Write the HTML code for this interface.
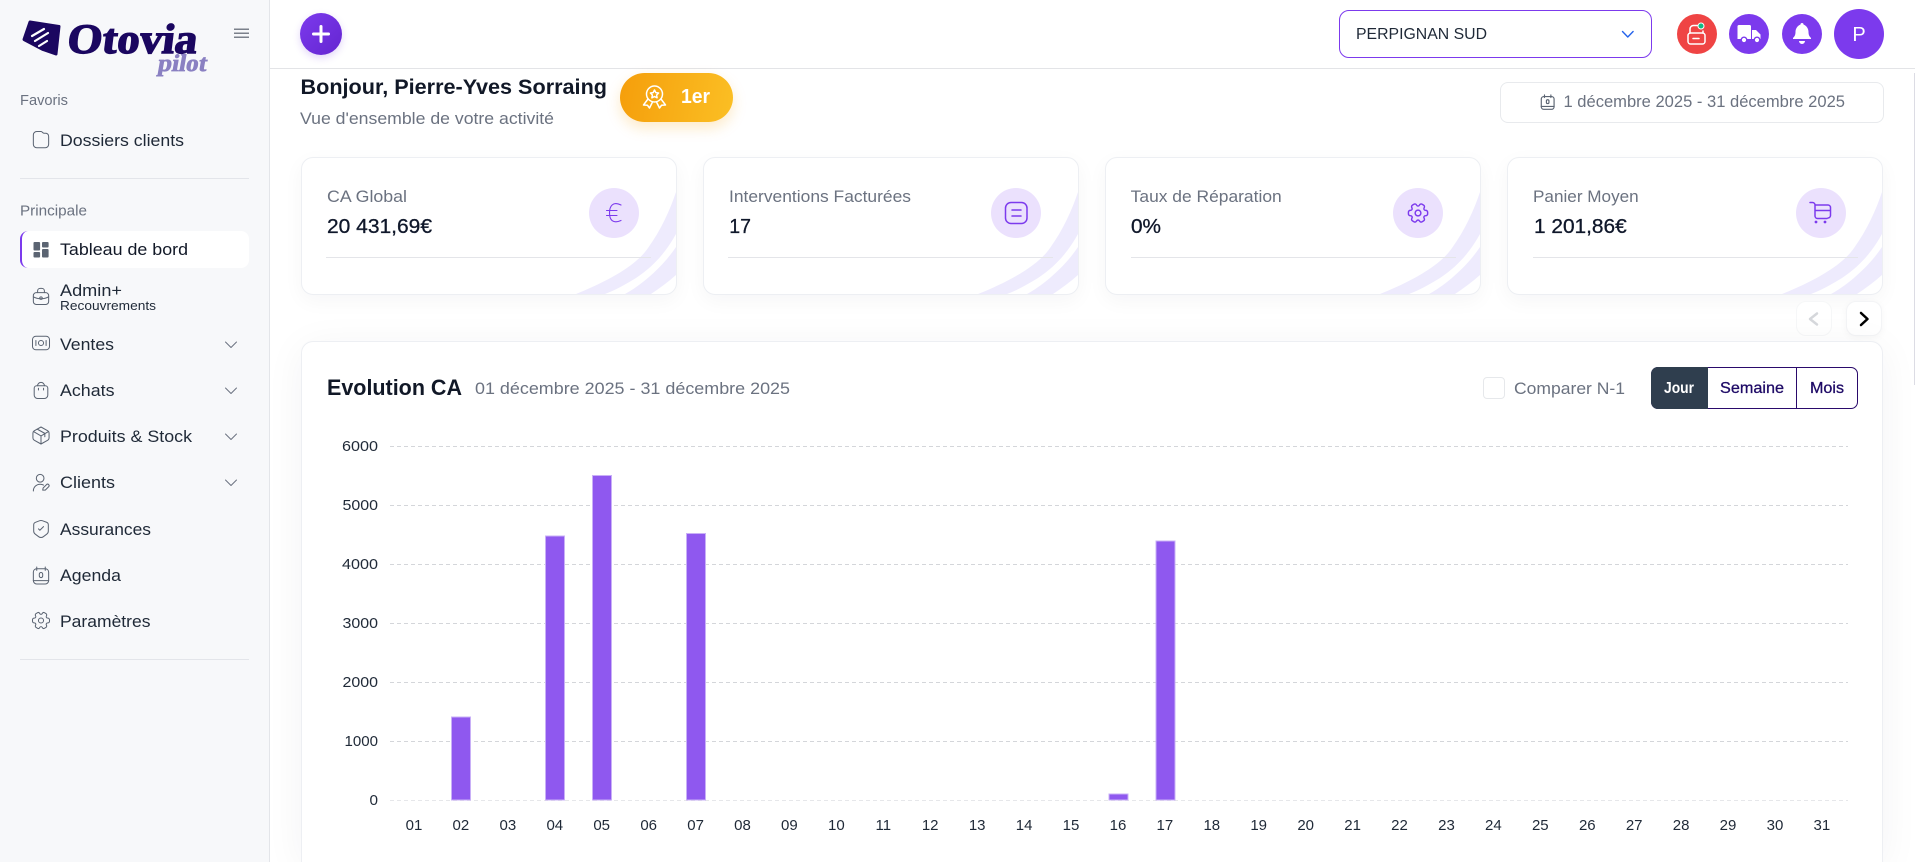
<!DOCTYPE html>
<html lang="fr">
<head>
<meta charset="utf-8">
<title>Otovia Pilot</title>
<style>
html,body{margin:0;padding:0;width:1915px;height:862px;overflow:hidden;background:#fff;font-family:"Liberation Sans",sans-serif}
#root{position:relative;width:1915px;height:862px;overflow:hidden;background:#fff}
.a{position:absolute;box-sizing:border-box}
.card{top:157px;width:376px;height:138px;background:#fff;border:1px solid #edeff3;border-radius:12px;box-shadow:0 6px 20px rgba(30,30,60,.04);overflow:hidden}
.card svg{position:absolute;right:0;bottom:0}
.circ{top:188px;width:50px;height:50px;border-radius:50%;background:#ebe1fd}
.hr{top:257px;height:1px;background:#e4e5e9;width:325px}
svg.o{position:absolute;left:0;top:0}
svg.o text{font-family:"Liberation Sans",sans-serif}
.g{fill:#6b7280}
.n{fill:#1f2937}
.m{stroke-width:.3px;paint-order:stroke}
.ic{fill:none;stroke:#5b6472;stroke-width:1.5;stroke-linecap:round;stroke-linejoin:round}
.pi{fill:none;stroke:#7c3aed;stroke-width:1.5;stroke-linecap:round;stroke-linejoin:round}
.ax{fill:#1f2937;font-size:15px}
.xl{fill:#1f2937;font-size:15px;text-anchor:middle}
.bar{fill:#8f58ef;stroke:#c9b0f7;stroke-width:1}
.gl{stroke:#d4d6da;stroke-width:1;stroke-dasharray:4 3}
</style>
</head>
<body>
<div id="root">
<!-- sidebar -->
<div class="a" style="left:0;top:0;width:270px;height:862px;background:#f7f8fa;border-right:1px solid #e3e5e9"></div>
<div class="a" style="left:20px;top:178px;width:229px;height:1px;background:#e3e5ea"></div>
<div class="a" style="left:20px;top:659px;width:229px;height:1px;background:#e3e5ea"></div>
<div class="a" style="left:20px;top:231px;width:229px;height:37px;background:#fff;border-left:2px solid #7c3aed;border-radius:8px"></div>

<!-- top bar -->
<div class="a" style="left:270px;top:0;width:1645px;height:69px;background:#fff;border-bottom:1px solid #e3e4e7"></div>
<div class="a" style="left:300px;top:13px;width:42px;height:42px;border-radius:50%;background:linear-gradient(135deg,#7c3aed,#6425d0);box-shadow:0 3px 8px rgba(110,50,220,.2)"></div>
<div class="a" style="left:1339px;top:10px;width:313px;height:48px;background:#fff;border:1px solid #7c3aed;border-radius:10px"></div>
<div class="a" style="left:1677px;top:14px;width:40px;height:40px;border-radius:50%;background:#ef4444"></div>
<div class="a" style="left:1729px;top:14px;width:40px;height:40px;border-radius:50%;background:#7c3aed"></div>
<div class="a" style="left:1782px;top:14px;width:40px;height:40px;border-radius:50%;background:#7c3aed"></div>
<div class="a" style="left:1834px;top:9px;width:50px;height:50px;border-radius:50%;background:#7c3aed"></div>

<!-- heading row -->
<div class="a" style="left:620px;top:73px;width:113px;height:49px;border-radius:25px;background:linear-gradient(100deg,#f59e0b,#fbbf24);box-shadow:0 6px 14px rgba(245,158,11,.22)"></div>
<div class="a" style="left:1500px;top:82px;width:384px;height:41px;background:#fff;border:1px solid #e8eaed;border-radius:8px"></div>

<!-- kpi cards -->
<div class="a card" style="left:301px"><svg width="100" height="102" viewBox="0 0 100 102"><path fill="#eeebfd" d="M0 102C30 90 60 74 72 56C85 38 94 18 100 0V42C90 60 78 74 60 86C50 92 40 98 29 102Z"/><path fill="#eeebfd" d="M49 102C64 94 86 76 100 55V83C92 90 84 96 75 102Z"/></svg></div>
<div class="a card" style="left:703px"><svg width="100" height="102" viewBox="0 0 100 102"><path fill="#eeebfd" d="M0 102C30 90 60 74 72 56C85 38 94 18 100 0V42C90 60 78 74 60 86C50 92 40 98 29 102Z"/><path fill="#eeebfd" d="M49 102C64 94 86 76 100 55V83C92 90 84 96 75 102Z"/></svg></div>
<div class="a card" style="left:1105px"><svg width="100" height="102" viewBox="0 0 100 102"><path fill="#eeebfd" d="M0 102C30 90 60 74 72 56C85 38 94 18 100 0V42C90 60 78 74 60 86C50 92 40 98 29 102Z"/><path fill="#eeebfd" d="M49 102C64 94 86 76 100 55V83C92 90 84 96 75 102Z"/></svg></div>
<div class="a card" style="left:1507px"><svg width="100" height="102" viewBox="0 0 100 102"><path fill="#eeebfd" d="M0 102C30 90 60 74 72 56C85 38 94 18 100 0V42C90 60 78 74 60 86C50 92 40 98 29 102Z"/><path fill="#eeebfd" d="M49 102C64 94 86 76 100 55V83C92 90 84 96 75 102Z"/></svg></div>
<div class="a hr" style="left:326px"></div><div class="a hr" style="left:728px"></div><div class="a hr" style="left:1131px"></div><div class="a hr" style="left:1533px"></div>
<div class="a circ" style="left:589px"></div><div class="a circ" style="left:991px"></div><div class="a circ" style="left:1393px"></div><div class="a circ" style="left:1796px"></div>

<!-- carousel buttons -->
<div class="a" style="left:1796px;top:301px;width:36px;height:35px;background:#fff;border:1px solid #f6f7f8;border-radius:10px"></div>
<div class="a" style="left:1846px;top:301px;width:36px;height:35px;background:#fff;border:1px solid #f3f4f6;border-radius:10px;box-shadow:0 2px 8px rgba(0,0,0,.04)"></div>

<!-- chart card: cut off by the viewport, so it stops at the frame with no bottom edge -->
<div class="a" style="left:301px;top:341px;width:1582px;height:521px;background:#fff;border:1px solid #edeff3;border-bottom:0;border-radius:12px 12px 0 0;box-shadow:0 6px 40px rgba(30,30,50,.05)"></div>
<div class="a" style="left:1483px;top:377px;width:22px;height:22px;background:#fff;border:1px solid #e6e8eb;border-radius:4px"></div>
<div class="a" style="left:1651px;top:367px;width:207px;height:42px;background:#fff;border:1px solid #2a0a6b;border-radius:7px"></div>
<div class="a" style="left:1651px;top:367px;width:57px;height:42px;background:#2f3e4e;border-radius:7px 0 0 7px"></div>
<div class="a" style="left:1796px;top:367px;width:1px;height:42px;background:#2a0a6b"></div>

<!-- scrollbar hint -->
<div class="a" style="left:1914px;top:73px;width:1px;height:312px;background:#dcdce4"></div>

<svg class="o" width="1915" height="862" viewBox="0 0 1915 862">
  <!-- logo -->
  <path fill="#1b0760" stroke="#1b0760" stroke-width="3" stroke-linejoin="round" d="M30 22 59 26.500 56 54 43 49.500 24 39.500Z"/>
  <g stroke="#fff" stroke-width="2.200" stroke-linecap="round"><path d="M32 36 44 29"/><path d="M35 41 48 33"/><path d="M39 46 47 41"/></g>
  <text transform="translate(66 53) skewX(-7)" x="0" y="0" font-size="42" font-weight="700" textLength="130" lengthAdjust="spacingAndGlyphs" style='font-family:"Liberation Serif",serif;fill:#1b0760;stroke:#1b0760;stroke-width:1.400px'>Otovia</text>
  <text transform="translate(157 71) skewX(-10)" x="0" y="0" font-size="24" font-weight="700" textLength="49" lengthAdjust="spacingAndGlyphs" style='font-family:"Liberation Serif",serif;fill:#8a80c2;stroke:#8a80c2;stroke-width:.7px'>pilot</text>
  <g stroke="#7b818b" stroke-width="1.500"><path d="M234 29.300h15M234 33.300h15M234 37.300h15"/></g>

  <!-- sidebar text -->
  <text class="g" x="20" y="105" font-size="15" textLength="48" lengthAdjust="spacingAndGlyphs">Favoris</text>
  <text class="n" x="60" y="146" font-size="17" textLength="124" lengthAdjust="spacingAndGlyphs">Dossiers clients</text>
  <text class="g" x="20" y="215.500" font-size="15" textLength="67" lengthAdjust="spacingAndGlyphs">Principale</text>
  <text fill="#111827" x="60" y="255" font-size="17" textLength="128" lengthAdjust="spacingAndGlyphs">Tableau de bord</text>
  <text class="n" x="60" y="296" font-size="17" textLength="62" lengthAdjust="spacingAndGlyphs">Admin+</text>
  <text class="n" x="60" y="310" font-size="13" textLength="96" lengthAdjust="spacingAndGlyphs">Recouvrements</text>
  <text class="n" x="60" y="350" font-size="17" textLength="54" lengthAdjust="spacingAndGlyphs">Ventes</text>
  <text class="n" x="60" y="396" font-size="17" textLength="54.500" lengthAdjust="spacingAndGlyphs">Achats</text>
  <text class="n" x="60" y="442" font-size="17" textLength="132" lengthAdjust="spacingAndGlyphs">Produits &amp; Stock</text>
  <text class="n" x="60" y="488" font-size="17" textLength="55" lengthAdjust="spacingAndGlyphs">Clients</text>
  <text class="n" x="60" y="535" font-size="17" textLength="91" lengthAdjust="spacingAndGlyphs">Assurances</text>
  <text class="n" x="60" y="581" font-size="17" textLength="61" lengthAdjust="spacingAndGlyphs">Agenda</text>
  <text class="n" x="60" y="627" font-size="17" textLength="90.500" lengthAdjust="spacingAndGlyphs">Paramètres</text>

  <!-- sidebar icons -->
  <g transform="translate(30.800 129) scale(.85)" class="ic" style="stroke-width:1.200"><path d="M3 7a4 4 0 0 1 4-4h5c1.500 0 2 2 3.500 2H18a4 4 0 0 1 3 4v9a4 4 0 0 1-4 4H7a4 4 0 0 1-4-4Z"/></g>
  <g fill="#5b6472"><rect x="33.500" y="242" width="6.600" height="8.500" rx="1"/><rect x="42" y="242" width="6.600" height="5.500" rx="1"/><rect x="33.500" y="252" width="6.600" height="5.500" rx="1"/><rect x="42" y="249" width="6.600" height="8.500" rx="1"/></g>
  <g transform="translate(30.800 285.800) scale(.85)" class="ic" style="stroke-width:1.200"><rect x="3" y="8" width="18" height="14" rx="3.500"/><path d="M8 8V6a3 3 0 0 1 3-3h2a3 3 0 0 1 3 3v2"/><path d="M3 13c5 3 13 3 18 0"/><circle cx="12" cy="14.500" r="1.500"/></g>
  <g transform="translate(30.800 332.800) scale(.85)" class="ic" style="stroke-width:1.200"><rect x="2" y="4" width="20" height="16" rx="4"/><circle cx="12" cy="12" r="3"/><path d="M6 9v6M18 9v6"/></g>
  <g transform="translate(30.800 379.800) scale(.85)" class="ic" style="stroke-width:1.200"><path d="M4 10a3 3 0 0 1 3-3h10a3 3 0 0 1 3 3v8a4 4 0 0 1-4 4H8a4 4 0 0 1-4-4Z"/><path d="M8 7a4 4 0 0 1 8 0"/><path d="M9 10v2M15 10v2"/></g>
  <g transform="translate(30.800 425.300) scale(.85)" class="ic" style="stroke-width:1.200"><path d="M12 2 20 6.500Q21.500 7.500 21.500 9V15Q21.500 16.500 20 17.500L12 22 4 17.500Q2.500 16.500 2.500 15V9Q2.500 7.500 4 6.500Z"/><path d="M3.500 7.500 12 12.500 20.500 7.500M12 12.500V22M7.500 4.500l9 5v4"/></g>
  <g transform="translate(30.800 472.300) scale(.85)" class="ic" style="stroke-width:1.200"><circle cx="11" cy="7" r="4.500"/><path d="M3 22c0-5 4-8 8-8 1.500 0 3 .4 4 1"/><path d="m14 21 .5-2.500 4-4a1.500 1.500 0 0 1 2.500 2.500l-4 4Z"/></g>
  <g transform="translate(30.800 518.800) scale(.85)" class="ic" style="stroke-width:1.200"><path d="M10.490 2.230 5.500 4.110c-1.150.43-2.090 1.790-2.090 3.010v7.430c0 1.180.78 2.730 1.730 3.440l4.300 3.210c1.410 1.060 3.730 1.060 5.140 0l4.300-3.210c.95-.71 1.730-2.260 1.730-3.440V7.120c0-1.230-.94-2.590-2.090-3.020l-4.990-1.870c-.85-.31-2.210-.31-3.040 0Z"/><path d="m9.050 11.870 1.610 1.610 4.300-4.300"/></g>
  <g transform="translate(30.800 565.300) scale(.85)" class="ic" style="stroke-width:1.200"><rect x="3" y="4" width="18" height="18" rx="4"/><path d="M7 2v4M17 2v4M3 18h18"/><rect x="10" y="8.500" width="4" height="6" rx="2"/></g>
  <g transform="translate(30.800 610.300) scale(.85)" class="ic" style="stroke-width:1.200"><path d="M12 15a3 3 0 1 0 0-6 3 3 0 0 0 0 6Z"/><path d="M2 12.880v-1.760c0-1.040.85-1.900 1.900-1.900 1.810 0 2.550-1.280 1.640-2.850-.52-.9-.21-2.070.7-2.590l1.730-.99c.79-.47 1.810-.19 2.280.6l.11.19c.9 1.570 2.380 1.570 3.290 0l.11-.19c.47-.79 1.490-1.070 2.280-.6l1.730.99c.91.52 1.220 1.690.7 2.590-.91 1.570-.17 2.850 1.640 2.850 1.040 0 1.900.85 1.900 1.900v1.760c0 1.040-.85 1.900-1.900 1.900-1.810 0-2.550 1.280-1.640 2.850.52.91.21 2.070-.7 2.590l-1.730.99c-.79.47-1.810.19-2.280-.6l-.11-.19c-.9-1.570-2.380-1.570-3.290 0l-.11.19c-.47.79-1.490 1.070-2.280.6l-1.730-.99a1.900 1.900 0 0 1-.7-2.590c.91-1.570.17-2.850-1.640-2.850-1.050 0-1.900-.86-1.900-1.900Z"/></g>
  <g fill="none" stroke="#6b7280" stroke-width="1" stroke-linecap="round" stroke-linejoin="round"><path d="M225.500 342l5.500 5.500 5.500-5.500"/><path d="M225.500 388l5.500 5.500 5.500-5.500"/><path d="M225.500 434l5.500 5.500 5.500-5.500"/><path d="M225.500 480l5.500 5.500 5.500-5.500"/></g>

  <!-- topbar icons -->
  <path d="M321 26.500v15M313.500 34h15" stroke="#fff" stroke-width="3" stroke-linecap="round"/>
  <text class="n" x="1356" y="39" font-size="16" textLength="131" lengthAdjust="spacingAndGlyphs">PERPIGNAN SUD</text>
  <path d="M1622.500 31.500l5.300 5.500 5.300-5.500" fill="none" stroke="#2563eb" stroke-width="1.400" stroke-linecap="round" stroke-linejoin="round"/>
  <g fill="none" stroke="#fff" stroke-width="1.500" stroke-linecap="round" stroke-linejoin="round"><rect x="1688" y="33" width="17" height="11" rx="2.500"/><path d="M1690 33v-4a3.500 3.500 0 0 1 3.500-3.500h4M1703 33v-2"/><path d="M1693 38.500h6"/></g>
  <circle cx="1701" cy="26" r="3" fill="#10b981" stroke="#fff" stroke-width="1"/>
  <path fill="#fff" d="M1739 25h10.500a1.500 1.500 0 0 1 1.500 1.500V39h-13.500V26.500a1.500 1.500 0 0 1 1.500-1.500ZM1752 30h4l4.500 4.500V39h-8.500Z"/>
  <circle cx="1744" cy="40" r="2.800" fill="#fff" stroke="#7c3aed" stroke-width="1.400"/><circle cx="1757" cy="40" r="2.800" fill="#fff" stroke="#7c3aed" stroke-width="1.400"/>
  <path fill="#fff" d="M1802 23c-1 0-1.500.5-1.500 1.500C1797 26 1795.500 29 1795.500 32c0 3-1 4.500-2.500 6v1h18v-1c-1.500-1.500-2.500-3-2.500-6 0-3-1.500-6-5-7.500 0-1-.5-1.500-1.500-1.500ZM1799 41h6a3 3 0 0 1-6 0Z"/>
  <text x="1859" y="41" fill="#fff" font-size="20" text-anchor="middle">P</text>

  <!-- greeting -->
  <text fill="#111827" x="300.500" y="94" font-size="21" font-weight="700" textLength="306.500" lengthAdjust="spacingAndGlyphs">Bonjour, Pierre-Yves Sorraing</text>
  <text class="g" x="300" y="124" font-size="17" textLength="254" lengthAdjust="spacingAndGlyphs">Vue d'ensemble de votre activité</text>
  <g fill="none" stroke="#fff" stroke-width="1.500" stroke-linecap="round" stroke-linejoin="round"><circle cx="654.500" cy="94" r="8"/><path d="M654.500 90l1.300 2.600 2.800.4-2 2 .5 2.800-2.600-1.300-2.600 1.300.5-2.800-2-2 2.800-.4Z"/><path d="M648 99l-4.500 6 4 .3 2 2.700 3-6M661 99l4.500 6-4 .3-2 2.700-3-6"/></g>
  <text fill="#fff" x="681" y="103" font-size="20" font-weight="700" textLength="29" lengthAdjust="spacingAndGlyphs">1er</text>
  <g transform="translate(1540 94) scale(.64)" class="ic" style="stroke-width:1.800"><rect x="2" y="4" width="20" height="20" rx="4"/><path d="M7 1.500v4M17 1.500v4M2 19.500h20"/><rect x="10" y="9" width="4" height="6" rx="2"/></g>
  <text class="g" x="1563.500" y="107" font-size="16.500" textLength="281.500" lengthAdjust="spacingAndGlyphs">1 décembre 2025 - 31 décembre 2025</text>

  <!-- kpi text -->
  <text class="g" x="327" y="202" font-size="17" textLength="80" lengthAdjust="spacingAndGlyphs">CA Global</text>
  <text class="m" fill="#0f172a" stroke="#0f172a" x="327" y="233" font-size="20" textLength="105" lengthAdjust="spacingAndGlyphs">20 431,69€</text>
  <text class="g" x="729" y="202" font-size="17" textLength="182" lengthAdjust="spacingAndGlyphs">Interventions Facturées</text>
  <text class="m" fill="#0f172a" stroke="#0f172a" x="729.300" y="233" font-size="20" textLength="21.700" lengthAdjust="spacingAndGlyphs">17</text>
  <text class="g" x="1130.700" y="202" font-size="17" textLength="151" lengthAdjust="spacingAndGlyphs">Taux de Réparation</text>
  <text class="m" fill="#0f172a" stroke="#0f172a" x="1131" y="233" font-size="20" textLength="30" lengthAdjust="spacingAndGlyphs">0%</text>
  <text class="g" x="1533" y="202" font-size="17" textLength="105.700" lengthAdjust="spacingAndGlyphs">Panier Moyen</text>
  <text class="m" fill="#0f172a" stroke="#0f172a" x="1534" y="233" font-size="20" textLength="92.700" lengthAdjust="spacingAndGlyphs">1 201,86€</text>

  <!-- kpi icons -->
  <path fill="none" stroke="#7c3aed" stroke-width="1.100" stroke-linecap="round" d="M621 205C613 201 609.500 206 609.500 213C609.500 220 613 224 621 220.500M606.500 210.500H617M606.500 215.500H617"/>
  <rect class="pi" x="1005.500" y="202.500" width="21.500" height="21" rx="5.500"/><path class="pi" d="M1012 210h9M1012 216h9"/>
  <g transform="translate(1406.500 201.500) scale(.96)"><path class="pi" d="M12 15a3 3 0 1 0 0-6 3 3 0 0 0 0 6Z"/><path class="pi" d="M2 12.880v-1.760c0-1.040.85-1.900 1.900-1.900 1.810 0 2.550-1.280 1.640-2.850-.52-.9-.21-2.070.7-2.590l1.730-.99c.79-.47 1.810-.19 2.280.6l.11.19c.9 1.570 2.380 1.570 3.290 0l.11-.19c.47-.79 1.490-1.070 2.280-.6l1.730.99c.91.52 1.220 1.690.7 2.590-.91 1.570-.17 2.850 1.640 2.850 1.040 0 1.900.85 1.900 1.900v1.760c0 1.040-.85 1.900-1.900 1.900-1.810 0-2.550 1.280-1.640 2.850.52.91.21 2.070-.7 2.590l-1.730.99c-.79.47-1.810.19-2.280-.6l-.11-.19c-.9-1.570-2.380-1.570-3.290 0l-.11.19c-.47.79-1.490 1.070-2.280.6l-1.730-.99a1.900 1.900 0 0 1-.7-2.590c.91-1.570.17-2.850-1.640-2.850-1.050 0-1.900-.86-1.900-1.900Z"/></g>
  <path class="pi" d="M1810 202.500h2.500a2.500 2.500 0 0 1 2.500 2.500v11a2.500 2.500 0 0 0 2.500 2.500h9.500M1815 205h13a2.500 2.500 0 0 1 2.500 2.500v8a2.500 2.500 0 0 1-2.500 2.500M1815 210.500h15.500"/>
  <circle cx="1816" cy="222" r="1.400" fill="#7c3aed"/><circle cx="1825" cy="222" r="1.400" fill="#7c3aed"/>

  <!-- carousel chevrons -->
  <path d="M1817 313.500l-7 5.500 7 5.500" fill="none" stroke="#d5d7db" stroke-width="2.500" stroke-linecap="round" stroke-linejoin="round"/>
  <path d="M1861 313l6.500 6-6.500 6" fill="none" stroke="#000" stroke-width="2.500" stroke-linecap="round" stroke-linejoin="round"/>

  <!-- chart header -->
  <text fill="#111827" x="327" y="395" font-size="22" font-weight="700" textLength="135" lengthAdjust="spacingAndGlyphs">Evolution CA</text>
  <text class="g" x="475" y="394" font-size="17" textLength="315" lengthAdjust="spacingAndGlyphs">01 décembre 2025 - 31 décembre 2025</text>
  <text class="g" x="1514" y="394" font-size="17" textLength="111" lengthAdjust="spacingAndGlyphs">Comparer N-1</text>
  <text fill="#fff" x="1664" y="393" font-size="16" font-weight="700" textLength="30" lengthAdjust="spacingAndGlyphs">Jour</text>
  <text class="m" fill="#1e0a66" stroke="#1e0a66" x="1720" y="393" font-size="16" textLength="64" lengthAdjust="spacingAndGlyphs">Semaine</text>
  <text class="m" fill="#1e0a66" stroke="#1e0a66" x="1810" y="393" font-size="16" textLength="34" lengthAdjust="spacingAndGlyphs">Mois</text>

  <!-- chart grid -->
  <path class="gl" d="M390 446.500H1848M390 505.500H1848M390 564.500H1848M390 623.500H1848M390 682.500H1848M390 741.500H1848"/>
  <path class="gl" style="stroke:#e6e7ea" d="M390 800.500H1848"/>
  <text class="ax" x="342" y="451" textLength="36" lengthAdjust="spacingAndGlyphs">6000</text>
  <text class="ax" x="342.500" y="510" textLength="35.500" lengthAdjust="spacingAndGlyphs">5000</text>
  <text class="ax" x="342" y="569" textLength="36" lengthAdjust="spacingAndGlyphs">4000</text>
  <text class="ax" x="342.500" y="628" textLength="35.500" lengthAdjust="spacingAndGlyphs">3000</text>
  <text class="ax" x="342.500" y="687" textLength="35.500" lengthAdjust="spacingAndGlyphs">2000</text>
  <text class="ax" x="344.500" y="746" textLength="33.500" lengthAdjust="spacingAndGlyphs">1000</text>
  <text class="ax" x="369.500" y="805" textLength="8.500" lengthAdjust="spacingAndGlyphs">0</text>

  <!-- bars -->
  <rect class="bar" x="451.500" y="717" width="19" height="83"/>
  <rect class="bar" x="545.500" y="536" width="19" height="264"/>
  <rect class="bar" x="592.500" y="475.500" width="19" height="324.500"/>
  <rect class="bar" x="686.500" y="533.500" width="19" height="266.500"/>
  <rect class="bar" x="1109" y="794" width="19" height="6"/>
  <rect class="bar" x="1156" y="541" width="19" height="259"/>

  <!-- x labels -->
  <text class="xl" x="414" y="830">01</text><text class="xl" x="460.900" y="830">02</text><text class="xl" x="507.900" y="830">03</text><text class="xl" x="554.800" y="830">04</text><text class="xl" x="601.700" y="830">05</text><text class="xl" x="648.700" y="830">06</text><text class="xl" x="695.600" y="830">07</text><text class="xl" x="742.500" y="830">08</text><text class="xl" x="789.400" y="830">09</text><text class="xl" x="836.400" y="830">10</text><text class="xl" x="883.300" y="830">11</text><text class="xl" x="930.200" y="830">12</text><text class="xl" x="977.200" y="830">13</text><text class="xl" x="1024.100" y="830">14</text><text class="xl" x="1071" y="830">15</text><text class="xl" x="1118" y="830">16</text><text class="xl" x="1164.900" y="830">17</text><text class="xl" x="1211.800" y="830">18</text><text class="xl" x="1258.700" y="830">19</text><text class="xl" x="1305.700" y="830">20</text><text class="xl" x="1352.600" y="830">21</text><text class="xl" x="1399.500" y="830">22</text><text class="xl" x="1446.500" y="830">23</text><text class="xl" x="1493.400" y="830">24</text><text class="xl" x="1540.300" y="830">25</text><text class="xl" x="1587.300" y="830">26</text><text class="xl" x="1634.200" y="830">27</text><text class="xl" x="1681.100" y="830">28</text><text class="xl" x="1728" y="830">29</text><text class="xl" x="1775" y="830">30</text><text class="xl" x="1821.900" y="830">31</text>
</svg>
</div>
</body>
</html>
